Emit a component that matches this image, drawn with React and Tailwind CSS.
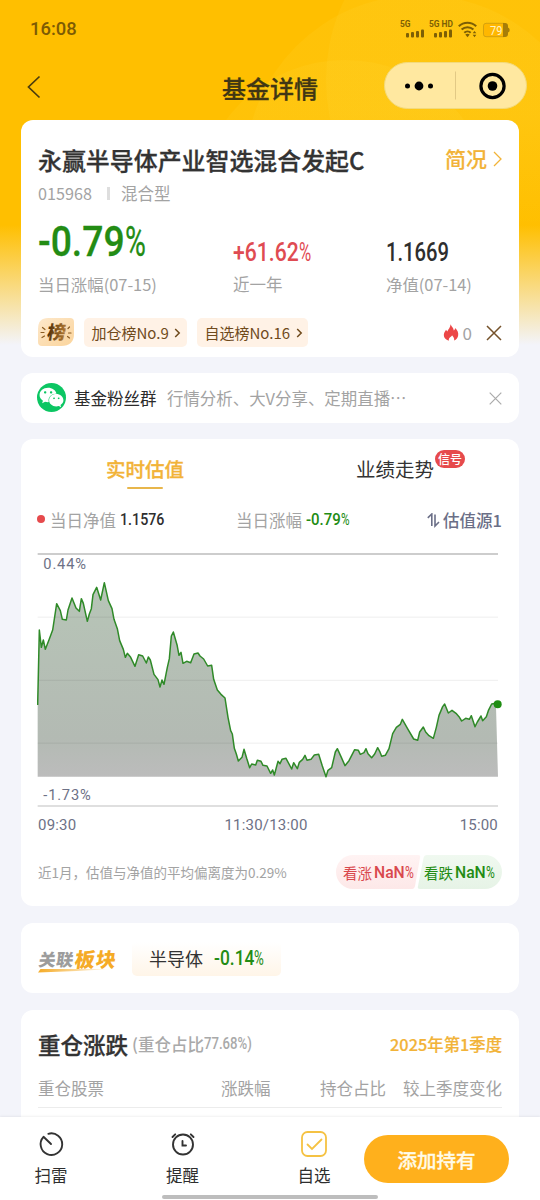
import { useLayoutEffect, useRef } from "react";
import { FaWeixin } from "react-icons/fa";

/* Condenses or widens one line of text so that it fills exactly `w` pixels. */
function Fit({ w, className = "", children }) {
  const ref = useRef(null);
  useLayoutEffect(() => {
    const el = ref.current;
    el.style.transform = `scaleX(${w / el.offsetWidth})`;
  }, [w]);
  return (
    <span className="inline-flex shrink-0" style={{ width: w }}>
      <span ref={ref} className={"inline-block shrink-0 origin-left whitespace-nowrap " + className}>
        {children}
      </span>
    </span>
  );
}

/* Condensed percentage: the value and a narrower, lighter percent sign. */
function Percent({ value, w, signWidth, className = "" }) {
  return (
    <span className={"flex font-[Roboto,sans-serif] leading-none " + className}>
      <Fit w={w - signWidth} className="font-medium">{value}</Fit>
      <Fit w={signWidth}>%</Fit>
    </span>
  );
}

function StatusIcons() {
  return (
    <svg width="112" height="22" viewBox="0 0 112 22" fill="#7d5f05">
      <g fontFamily="Roboto, sans-serif" fontWeight="700" fontSize="8.5">
        <text x="1" y="8.800" textLength="10.5" lengthAdjust="spacingAndGlyphs">5G</text>
        <text x="30" y="8.800" textLength="24" lengthAdjust="spacingAndGlyphs">5G HD</text>
      </g>
      <g>
        <rect x="7" y="15" width="3" height="4.500" rx="1" />
        <rect x="12" y="14" width="3" height="5.500" rx="1" />
        <rect x="17" y="13" width="3" height="6.500" rx="1" />
        <rect x="22" y="11.500" width="3" height="8" rx="1" />
        <rect x="35" y="15" width="3" height="4.500" rx="1" />
        <rect x="40" y="14" width="3" height="5.500" rx="1" />
        <rect x="45" y="13" width="3" height="6.500" rx="1" />
        <rect x="50" y="11.500" width="3" height="8" rx="1" />
      </g>
      <g fill="none" stroke="#7d5f05" strokeWidth="2.100">
        <path d="M59.800 8.300a12.500 12.500 0 0 1 17.400 0" />
        <path d="M62.600 11.600a8.500 8.500 0 0 1 11.800 0" />
        <path d="M65.300 14.700a4.700 4.700 0 0 1 6.400 0" />
      </g>
      <path d="M66.300 16.500q2.200-1.400 4.400 0l-2.200 2.800z" />
      <path d="M73.700 15.300l1.800-2.300 1.800 2.300zM73.700 16.700h3.600l-1.800 2.500z" />
      <rect x="84.500" y="5.300" width="23" height="13.400" rx="2.500" fill="#ffb700" stroke="#c99a10" strokeWidth="0.800" />
      <path d="M104 5h2q3 0 3 3V9.500q1.700.500 1.700 2.500t-1.700 2.500v1.500q0 3-3 3h-2z" fill="#a67d08" />
      <text x="91" y="16.500" fill="#fff3c4" fontFamily="Roboto, sans-serif" fontSize="12.500" textLength="12.500" lengthAdjust="spacingAndGlyphs">79</text>
    </svg>
  );
}

function Header() {
  return (
    <header className="h-[120px]">
      <div className="flex h-[58px] items-center justify-between pb-[1px] pl-[30px] pr-[29px]">
        <Fit w={47} className="font-[Roboto,sans-serif] text-[18px] font-medium text-[#7d5b04]">16:08</Fit>
        <StatusIcons />
      </div>
      <div className="flex h-[57px] items-center">
        <div className="flex w-[222px] pl-[27px]">
          <svg width="15" height="24" viewBox="0 0 15 24" fill="none" stroke="#4b3c0d" strokeWidth="1.700">
            <path d="M12.500 1.500 1.500 12l11 10.500" />
          </svg>
        </div>
        <h1 className="w-[162px] pt-[2px] text-[24px] font-medium leading-none text-[#403614] [-webkit-text-stroke:0.3px]">基金详情</h1>
        <div className="mb-[2px] flex h-[47px] w-[143px] items-center rounded-full border border-[#f3da7c] bg-[#ffe8a0]">
          <svg width="141" height="45" viewBox="0 0 141 45">
            <circle cx="22.500" cy="23" r="2.500" />
            <circle cx="34" cy="23" r="4.400" />
            <circle cx="45.500" cy="23" r="2.500" />
            <path d="M70.500 8.500v28" stroke="#e2c985" />
            <circle cx="107.500" cy="23" r="11.600" fill="none" stroke="#000" strokeWidth="3.200" />
            <circle cx="107.500" cy="23" r="4.800" />
          </svg>
        </div>
      </div>
    </header>
  );
}

function RankTag({ w, textWidth, children }) {
  return (
    <div className="flex h-[29px] items-center rounded-[5px] bg-[#fff2e6] pl-[7.500px]" style={{ width: w }}>
      <Fit w={textWidth} className="pt-px text-[15px] text-[#6f4a1c]">{children}</Fit>
      <svg className="ml-[5px]" width="7" height="10" viewBox="0 0 7 10" fill="none" stroke="#6f4a1c" strokeWidth="1.500">
        <path d="M1.200 1 5.200 5l-4 4" />
      </svg>
    </div>
  );
}

function RankBadge() {
  return (
    <svg width="36" height="29" viewBox="0 0 36 29">
      <defs>
        <linearGradient id="rank" x1="0" y1="0" x2="1" y2="1">
          <stop offset="0" stopColor="#fde8cb" />
          <stop offset="1" stopColor="#fbd49b" />
        </linearGradient>
        <linearGradient id="rankText" x1="0" y1="0" x2="1" y2="0">
          <stop offset="0" stopColor="#4f2f08" />
          <stop offset="1" stopColor="#b57b32" />
        </linearGradient>
      </defs>
      <path d="M10 0h22q4 0 4 4v12q0 12-13 12H4q-4 0-4-4V11Q0 0 10 0z" fill="url(#rank)" />
      <text transform="translate(8.500 21) skewX(-8)" fill="url(#rankText)" fontFamily="Noto Sans CJK SC, sans-serif" fontWeight="900" fontSize="18.500">榜</text>
      <g stroke="#8a5a20" strokeWidth="1.200" strokeLinecap="round">
        <path d="M4.500 9.500l2.500 2M3 14.500h3M4 19.500l2.500-1.500M30 10.500l1.500-1.500M30.500 15H33M29.500 18.500l2 1.500" />
      </g>
    </svg>
  );
}

function SummaryCard() {
  return (
    <section className="flex h-[236.700px] flex-col rounded-[12px] bg-white px-[17px] pt-[22px]">
      <div className="flex h-9 items-center justify-between">
        <Fit w={327} className="text-[24px] font-medium leading-none text-[#333] [-webkit-text-stroke:0.3px]">永赢半导体产业智选混合发起C</Fit>
        <div className="-mt-[3px] flex items-center gap-[6px] text-[21px] font-medium leading-none text-[#f2b338] [-webkit-text-stroke:0.2px]">
          简况
          <svg className="mt-[1px]" width="9" height="16" viewBox="0 0 9 16" fill="none" stroke="#f2b338" strokeWidth="1.300">
            <path d="M1 1 8 8l-7 7" />
          </svg>
        </div>
      </div>
      <div className="flex h-[30px] items-center text-[#a3a3a3]">
        <Fit w={54} className="text-[16.500px]">015968</Fit>
        <i className="ml-[15px] mr-[11px] h-[13px] w-[3px] bg-[#dedede]" />
        <span className="text-[16.500px]">混合型</span>
      </div>
      <div className="flex text-[#a3a3a3]">
        <div className="w-[195px]">
          <div className="flex h-[66px] items-center pt-px">
            <Percent value="-0.79" w={108} signWidth={21} className="text-[42px] text-[#238c14] [-webkit-text-stroke:0.3px]" />
          </div>
          <div className="flex h-5 items-center"><Fit w={119} className="text-[16px]">当日涨幅(07-15)</Fit></div>
        </div>
        <div className="w-[153px]">
          <div className="flex h-[66px] items-center pt-[22px]">
            <Percent value="+61.62" w={78} signWidth={12} className="text-[25px] text-[#df4b52]" />
          </div>
          <div className="flex h-5 items-center text-[16.500px]">近一年</div>
        </div>
        <div>
          <div className="flex h-[66px] items-center pt-[22px]">
            <Fit w={63} className="font-[Roboto,sans-serif] text-[25px] font-medium leading-none text-[#2e2e2e]">1.1669</Fit>
          </div>
          <div className="flex h-5 items-center"><Fit w={86} className="text-[16px]">净值(07-14)</Fit></div>
        </div>
      </div>
      <div className="mt-6 flex h-[29px] items-center">
        <RankBadge />
        <div className="ml-[10px] flex gap-[10px]">
          <RankTag w={103} textWidth={77}>加仓榜No.9</RankTag>
          <RankTag w={111} textWidth={86}>自选榜No.16</RankTag>
        </div>
        <div className="ml-auto flex items-center">
          <svg width="16" height="17" viewBox="0 0 16 17" fill="#ec4747">
            <path d="M7.600.2C8.500 2.600 10.600 4 10.800 6.500 11.700 5.900 12 5 12 4 14.300 5.900 15.600 8.400 15.200 11.200 14.900 13.700 13.400 15.600 11.100 16.600 11.700 14.600 10.400 12.900 9 11.300 8.800 12.300 8.100 12.600 7.400 13.100 6.200 13.900 5.600 15.100 5.800 16.700 2.700 15.900.8 13.900.8 11.100.8 8.700 2.300 7.200 3 5.700L4.300 7.600C5.300 5 7.500 3.300 7.600.2z" />
          </svg>
          <span className="ml-[4px] text-[17px] leading-none text-[#a3a3a3]">0</span>
          <svg className="ml-[14px]" width="16" height="16" viewBox="0 0 16 16" stroke="#75522b" strokeWidth="1.500">
            <path d="M1 1l14 14M15 1 1 15" />
          </svg>
        </div>
      </div>
    </section>
  );
}

function FansCard() {
  return (
    <section className="flex h-[49.300px] items-center rounded-[12px] bg-white pl-[16px] pr-[17px]">
      <div className="flex size-[29px] items-center justify-center rounded-full bg-[#0cc663] text-white">
        <FaWeixin size={25} />
      </div>
      <span className="ml-[8px] pt-px text-[16.500px] text-[#2b2b2b]">基金粉丝群</span>
      <Fit w={240} className="ml-[10px] pt-px text-[16.500px] text-[#a3a3a3]">行情分析、大V分享、定期直播⋯</Fit>
      <svg className="ml-auto mt-[2px]" width="13" height="13" viewBox="0 0 13 13" stroke="#aaa" strokeWidth="1.200">
        <path d="M.7.7l11.600 11.600M12.300.7.7 12.300" />
      </svg>
    </section>
  );
}

const SERIES =
  "23,495 28,270 34,322 40,300 46,328 56,302 68,270 80,191 91,212 97,238 109,240 114,210 126,174 138,204 148,214 154,176 160,190 172,244 178,222 184,206 189,164 200,142 212,180 223,128 235,182 246,206 252,238 262,266 269,302 280,328 286,352 292,340 302,352 315,379 326,344 338,348 349,369 355,351 361,360 372,403 384,419 390,441 396,420 402,433 412,382 418,356 424,288 430,276 441,314 447,346 453,337 459,370 470,364 482,368 492,342 504,339 510,348 521,357 533,378 545,376 551,418 562,450 573,463 585,474 594,532 602,572 607,582 613,625 619,642 625,663 636,652 642,628 650,655 659,683 665,672 677,675 682,661 693,664 699,676 711,678 722,700 728,690 733,705 744,664 750,671 756,658 768,655 785,687 791,668 802,686 808,667 818,658 825,646 831,661 843,658 853,645 866,643 877,678 888,710 894,691 905,683 916,636 922,626 934,652 945,677 957,662 974,629 985,631 991,643 1002,638 1008,626 1014,641 1025,653 1034,642 1043,623 1049,634 1055,649 1066,646 1077,626 1088,581 1099,562 1111,553 1117,538 1134,568 1151,597 1163,601 1169,576 1180,561 1187,576 1197,587 1210,595 1219,562 1227,526 1238,500 1244,492 1255,519 1266,511 1278,520 1287,530 1295,543 1307,535 1318,538 1324,527 1335,560 1342,546 1353,528 1358,542 1369,530 1375,512 1385,492 1397,490";

function Chart() {
  return (
    <svg className="-ml-[1px] block" width="467" height="270" viewBox="21 0 1401 810">
      <defs>
        <linearGradient id="area" x1="0" y1="128" x2="0" y2="710" gradientUnits="userSpaceOnUse">
          <stop offset="0" stopColor="#b7c5b7" />
          <stop offset="0.800" stopColor="#b3bab3" />
          <stop offset="1" stopColor="#bcbcbc" />
        </linearGradient>
      </defs>
      <polygon points={`23,710 ${SERIES} 1398,500 1404,710`} fill="url(#area)" />
      <g strokeWidth="3">
        <path d="M23 231.500H1404M23 421H1404M23 609.500H1404" stroke="#000" strokeOpacity="0.070" />
        <path d="M23 42H1404" stroke="#bcbcbc" strokeWidth="4" />
        <path d="M23 798H1404" stroke="#d4d4d4" strokeWidth="4" />
      </g>
      <polyline points={`${SERIES} 1404,492`} fill="none" stroke="#2f8a28" strokeWidth="4.500" strokeLinejoin="round" />
      <circle cx="1403" cy="493" r="12" fill="#1f8d12" />
      <g fill="#6d7186" fontFamily="Roboto, sans-serif" fontSize="44" lengthAdjust="spacing">
        <text x="40" y="86" textLength="128">0.44%</text>
        <text x="40" y="781" textLength="142">-1.73%</text>
      </g>
    </svg>
  );
}

function ChartCard() {
  return (
    <section className="h-[466.700px] rounded-[12px] bg-white px-[17px]">
      <div className="flex h-[60px] text-[19.500px] leading-none">
        <div className="ml-[68px] flex h-[60px] w-[78px] flex-col items-center pt-[20px] font-medium text-[#f2b338] [-webkit-text-stroke:0.300px]">
          实时估值
          <i className="mt-[8px] h-[2px] w-[36px] rounded-full bg-[#e8b64b]" />
        </div>
        <div className="relative ml-[172px] pt-[20px] text-[#333]">
          业绩走势
          <span className="absolute left-[79px] top-[11px] flex h-[18px] w-[30px] items-center justify-center rounded-full bg-[#e64a4c] text-[12px] font-medium leading-none text-white">
            信号
          </span>
        </div>
      </div>
      <div className="flex h-[40.700px] items-center pt-[1px] text-[16.500px] text-[#a3a3a3]">
        <i className="-ml-[1px] mr-[5px] mb-[2px] size-[8px] rounded-full bg-[#e64a4c]" />
        <Fit w={66}>当日净值</Fit>
        <Fit w={44} className="ml-[4px] font-[Roboto,sans-serif] font-medium text-[#2e2e2e]">1.1576</Fit>
        <span className="ml-[76px] flex"><Fit w={66}>当日涨幅</Fit></span>
        <Percent value="-0.79" w={43} signWidth={8.5} className="ml-[4px] text-[#238c14]" />
        <div className="ml-auto flex items-center gap-[3px] font-medium text-[#6b6f87]">
          <svg width="13" height="15" viewBox="0 0 13 15" fill="none" stroke="#6b6f87" strokeWidth="1.600">
            <path d="M.8 4.800 4.800 1v12M8 1.500V13l4-4" />
          </svg>
          <Fit w={59}>估值源1</Fit>
        </div>
      </div>
      <Chart />
      <div className="flex h-[29px] items-center justify-between pr-[4px] pt-[2px] font-[Roboto,sans-serif] text-[15px] tracking-[0.200px] text-[#6d7186]">
        <span>09:30</span>
        <span className="-ml-[4px]">11:30/13:00</span>
        <span>15:00</span>
      </div>
      <div className="mt-[16px] flex h-[34px] items-center">
        <Fit w={249} className="text-[13.500px] text-[#a3a3a3]">近1月，估值与净值的平均偏离度为0.29%</Fit>
        <div className="relative ml-auto h-[34px] w-[166px]">
          <svg width="166" height="34" viewBox="0 0 166 34">
            <defs>
              <linearGradient id="up" x1="0" y1="0" x2="0" y2="1"><stop offset="0" stopColor="#fff3f3" /><stop offset="1" stopColor="#fde8e8" /></linearGradient>
              <linearGradient id="down" x1="0" y1="0" x2="0" y2="1"><stop offset="0" stopColor="#f0f9f0" /><stop offset="1" stopColor="#e6f3e6" /></linearGradient>
            </defs>
            <path d="M17 0H82q3 0 2 3L79 31q-.700 3-3 3H17A17 17 0 0 1 17 0z" fill="url(#up)" />
            <path d="M91 0h58a17 17 0 0 1 0 34H84q-3 0-2-3L87.500 3q.700-3 3.500-3z" fill="url(#down)" />
          </svg>
          <div className="absolute inset-0 flex items-center pl-[7px] pt-[2px] text-[15px]">
            <span className="flex items-center gap-[2px] text-[#d9484d]">
              <Fit w={29}>看涨</Fit>
              <Percent value="NaN" w={39} signWidth={8.5} className="text-[17px]" />
            </span>
            <span className="ml-[11px] flex items-center gap-[2px] text-[#238c14]">
              <Fit w={29}>看跌</Fit>
              <Percent value="NaN" w={39} signWidth={8.5} className="text-[17px]" />
            </span>
          </div>
        </div>
      </div>
    </section>
  );
}

function SectorCard() {
  return (
    <section className="flex h-[70.600px] items-center rounded-[12px] bg-white px-[17px]">
      <svg width="82" height="32" viewBox="0 0 82 32">
        <defs>
          <linearGradient id="swoosh" x1="0" y1="0" x2="1" y2="0"><stop offset="0" stopColor="#f5ab26" /><stop offset="1" stopColor="#f5ab26" stopOpacity="0" /></linearGradient>
        </defs>
        <g fontFamily="Noto Sans CJK SC, sans-serif" fontWeight="900">
          <text transform="translate(0 24) skewX(-8)" fontSize="17" textLength="34.500" fill="#9c9c9c">关联</text>
          <text transform="translate(36 24.500) skewX(-8)" fontSize="20" textLength="41" fill="#f5ab26">板块</text>
        </g>
        <path d="M2.500 27H74Q40 29 0 30.500z" fill="url(#swoosh)" />
      </svg>
      <div className="ml-[12px] mt-[2px] flex h-[34px] w-[149px] items-center rounded-[5px] bg-gradient-to-b from-white to-[#fff5e8] pb-[2px] pl-[17px]">
        <span className="text-[18px] leading-none text-[#333]">半导体</span>
        <Percent value="-0.14" w={50} signWidth={10} className="ml-[11px] text-[20px] text-[#238c14]" />
      </div>
    </section>
  );
}

function HoldingsCard() {
  return (
    <section className="h-[120px] rounded-t-[12px] bg-white px-[17px] pt-[14px]">
      <div className="flex h-10 items-center">
        <span className="text-[22.500px] font-medium leading-none text-[#333] [-webkit-text-stroke:0.3px]">重仓涨跌</span>
        <span className="ml-[4px] flex items-center text-[#a9a9a9]">
          <Fit w={72} className="text-[16.500px] font-medium">(重仓占比</Fit>
          <Fit w={48} className="font-[Roboto,sans-serif] text-[17px] font-medium">77.68%)</Fit>
        </span>
        <span className="ml-auto flex"><Fit w={112} className="text-[16.500px] font-medium text-[#f2b338] [-webkit-text-stroke:0.2px]">2025年第1季度</Fit></span>
      </div>
      <div className="flex h-[44px] items-center border-b border-[#ececec] pt-[6px] text-[16.500px] text-[#a3a3a3]">
        <span className="w-[183px]">重仓股票</span>
        <span className="w-[99px]">涨跌幅</span>
        <span>持仓占比</span>
        <span className="ml-auto">较上季度变化</span>
      </div>
    </section>
  );
}

function NavItem({ label, children }) {
  return (
    <div className="flex w-[66px] flex-col items-center">
      <svg width="32" height="32" viewBox="0 0 32 32" fill="none" strokeLinecap="round">{children}</svg>
      <span className="mt-[7px] text-[16.500px] leading-none text-[#2e2e2e]">{label}</span>
    </div>
  );
}

function BottomBar() {
  return (
    <nav className="relative flex h-[83px] items-start bg-white pl-[18px] pt-[11px] shadow-[0_-1px_2px_rgba(0,0,0,0.06)]">
      <div className="flex gap-[65.500px]">
        <NavItem label="扫雷">
          <path d="M13.300 5.800A10.800 10.800 0 1 1 8.500 8.800L16 16" stroke="#333" strokeWidth="1.900" strokeLinejoin="round" />
        </NavItem>
        <NavItem label="提醒">
          <g stroke="#333" strokeWidth="1.900">
            <circle cx="16" cy="16.500" r="10" />
            <path d="M15.500 13v4.500h3.500M5.500 9l2.700-2.700M26.500 9l-2.700-2.700" />
          </g>
        </NavItem>
        <NavItem label="自选">
          <g stroke="#f5c243" strokeWidth="1.800">
            <rect x="4" y="4" width="24" height="24" rx="5.500" />
            <path d="M9.500 16.500l4.500 4.500 9.500-9.500" />
          </g>
        </NavItem>
      </div>
      <button className="ml-[17px] mt-[7px] flex h-[48px] w-[145px] items-center justify-center rounded-full bg-[#ffb01c] pt-px text-[19.500px] font-medium leading-none text-[#fffbe8] [-webkit-text-stroke:0.3px]">
        添加持有
      </button>
      <i className="absolute left-[162px] top-[78px] h-[4px] w-[216px] rounded-full bg-[#bdbdbd]" />
    </nav>
  );
}

export default function App() {
  return (
    <div className="relative flex h-[1200px] w-[540px] flex-col overflow-hidden bg-[#f3f4fa] font-['Noto_Sans_CJK_SC',sans-serif]">
      <div className="absolute inset-x-0 top-0 h-[345px] bg-[linear-gradient(to_bottom,#ffbf00_0px,#ffbf00_225px,#f3f4fa_345px)]">
        <svg width="540" height="230" viewBox="0 0 540 230">
          <defs>
            <linearGradient id="glow" x1="0" y1="0" x2="0" y2="230" gradientUnits="userSpaceOnUse"><stop offset="0.500" stopColor="#ffe04a" stopOpacity="0.110" /><stop offset="1" stopColor="#ffe04a" stopOpacity="0" /></linearGradient>
          </defs>
          <circle cx="420" cy="170" r="175" fill="url(#glow)" />
          <circle cx="510" cy="80" r="184" fill="url(#glow)" />
          <circle cx="345" cy="208" r="148" fill="url(#glow)" />
        </svg>
      </div>
      <div className="relative h-[1117px] shrink-0 overflow-hidden">
        <Header />
        <main className="flex flex-col gap-[16.670px] px-[21px]">
          <SummaryCard />
          <FansCard />
          <ChartCard />
          <SectorCard />
          <HoldingsCard />
        </main>
      </div>
      <BottomBar />
    </div>
  );
}
